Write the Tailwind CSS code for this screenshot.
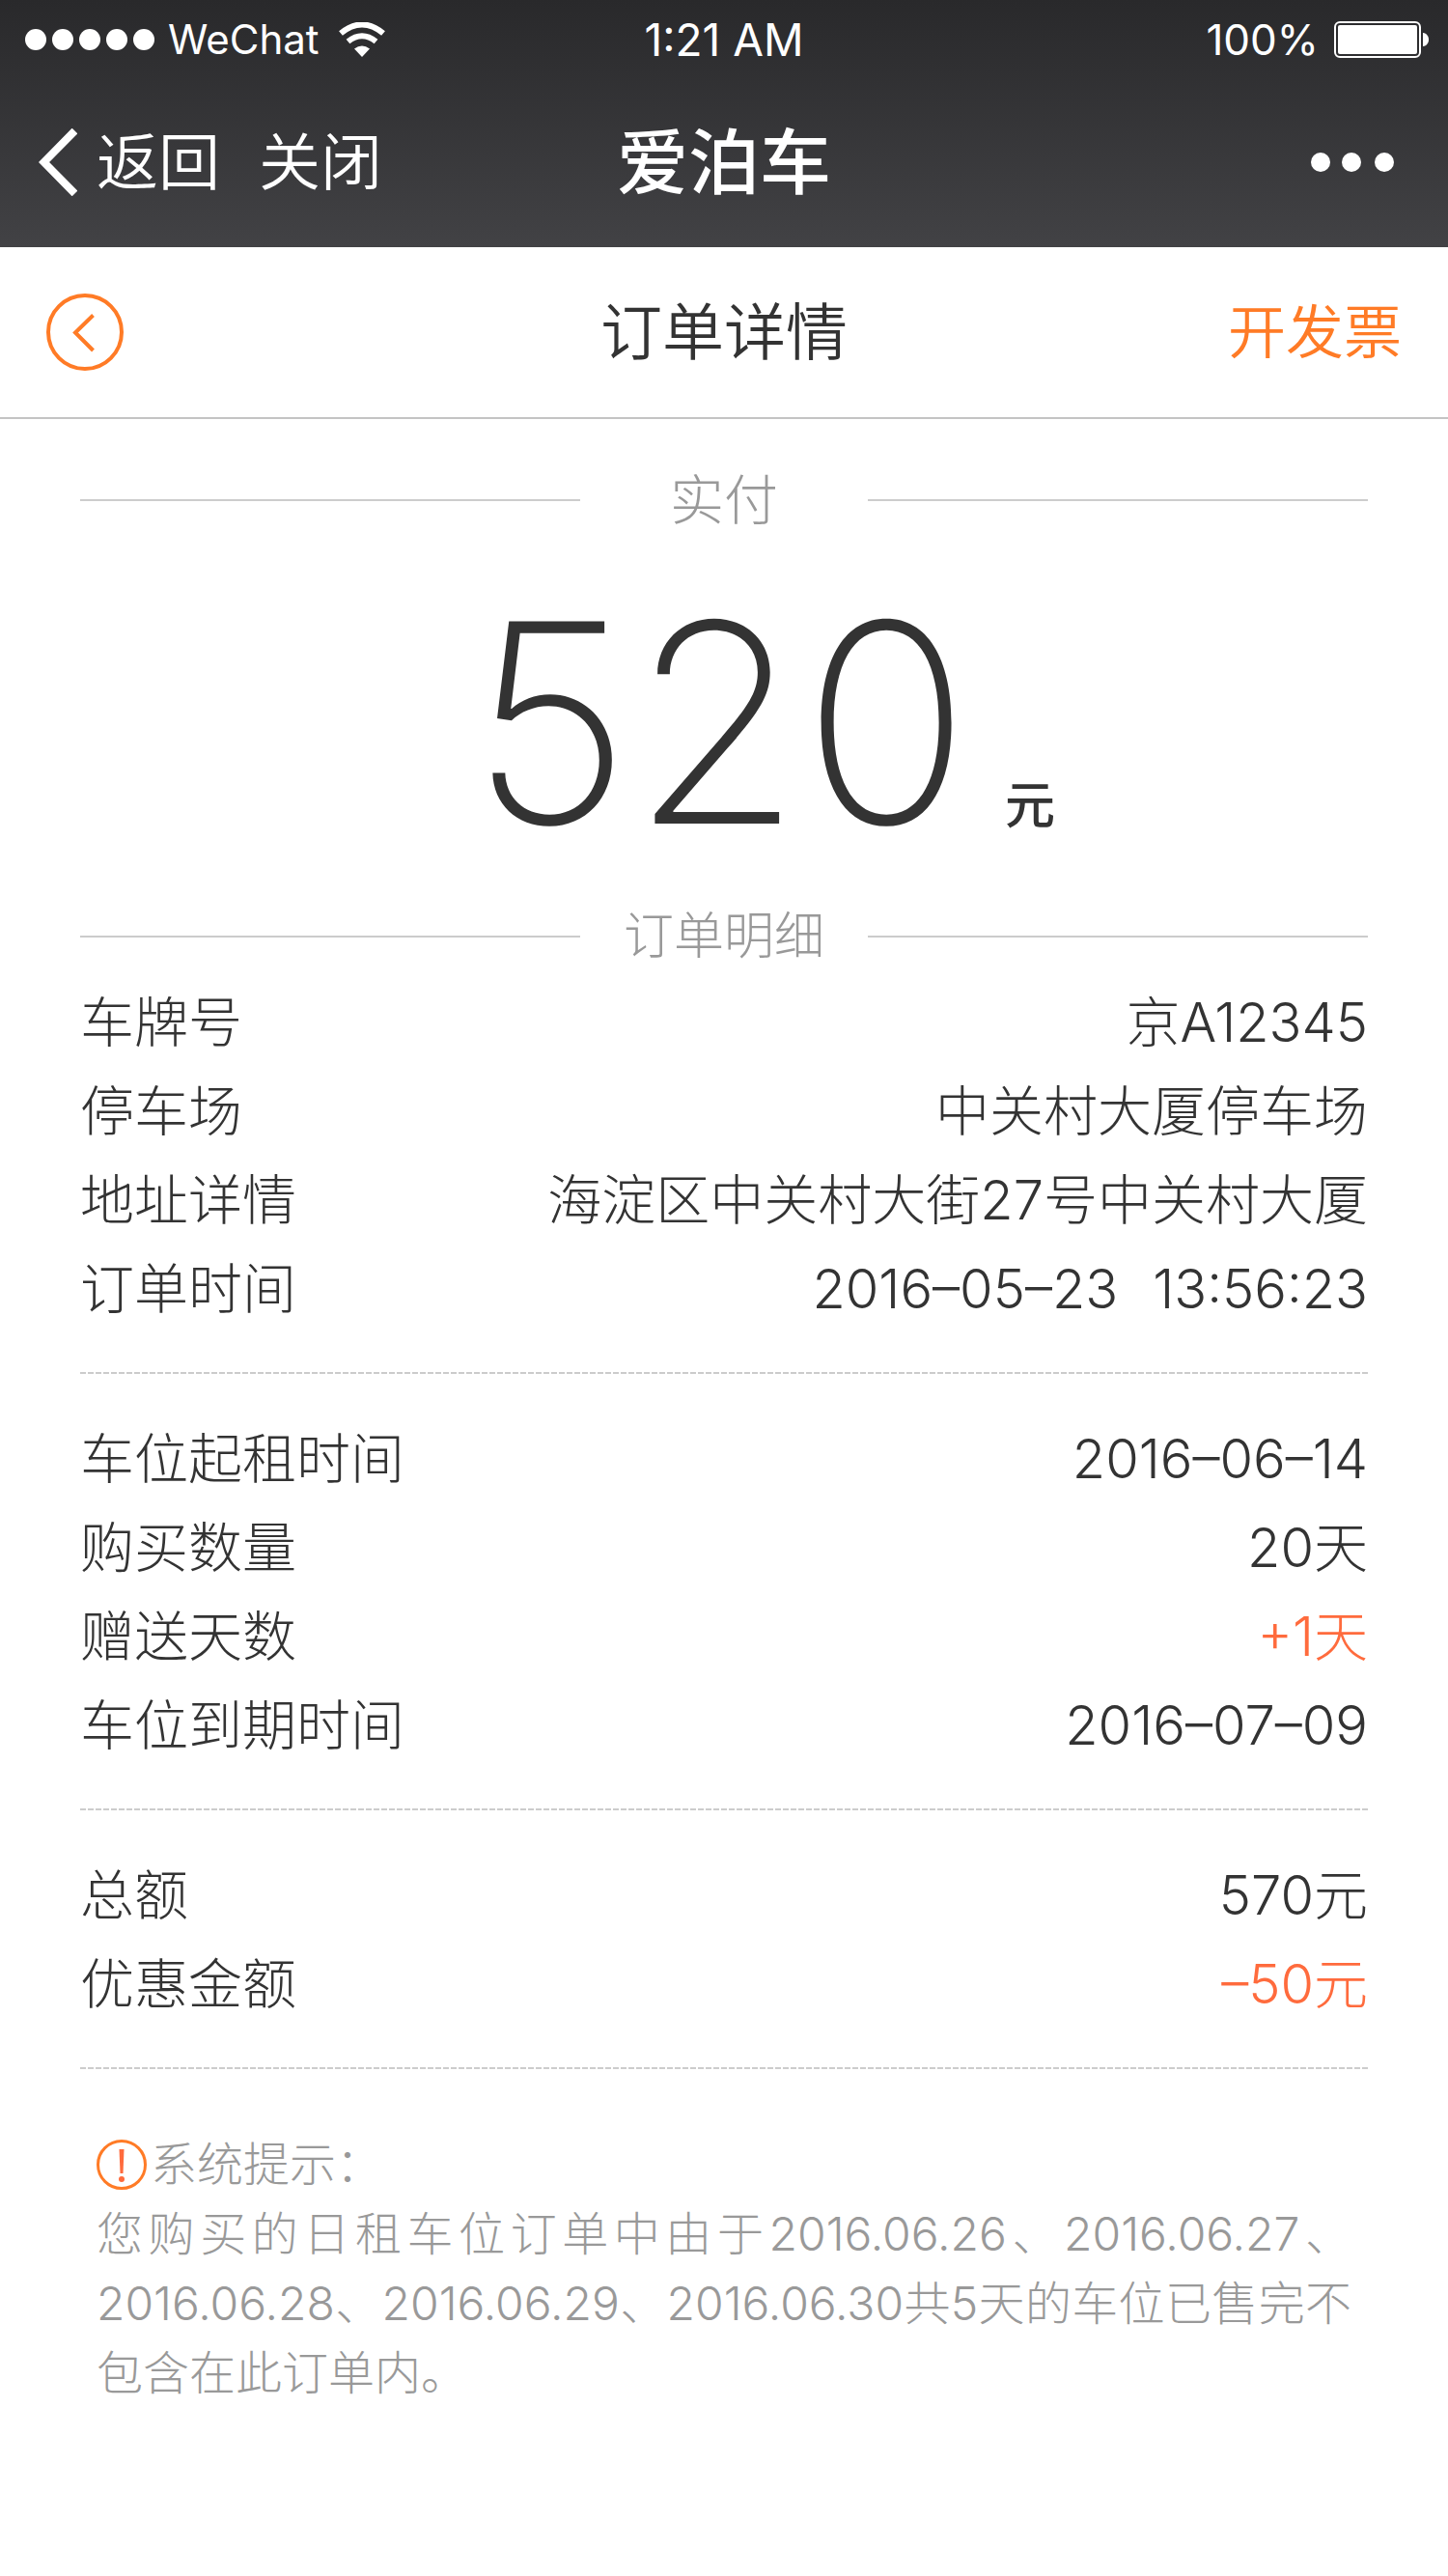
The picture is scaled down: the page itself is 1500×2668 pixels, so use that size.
<!DOCTYPE html>
<html lang="zh-CN">
<head>
<meta charset="utf-8">
<meta name="viewport" content="width=device-width, initial-scale=1">
<title>订单详情</title>
<script src="https://cdn.jsdelivr.net/npm/@tailwindcss/browser@4"></script>
</head>
<body class="min-h-screen bg-white font-['Inter','Noto_Sans_CJK_SC',sans-serif] font-light text-[#333333]">

<header class="h-64 bg-linear-to-b from-[#29292b] to-[#424245] text-white">
  <!-- Status bar -->
  <div class="grid h-[82px] grid-cols-[1fr_auto_1fr] items-center px-5 text-[46px] leading-[56px] font-normal">
    <div class="flex items-center pl-[6px]">
      <svg class="h-[22px] w-[134px]" viewBox="0 0 134 22" fill="currentColor" aria-hidden="true">
        <circle cx="11" cy="11" r="11"/><circle cx="39" cy="11" r="11"/><circle cx="67" cy="11" r="11"/><circle cx="95" cy="11" r="11"/><circle cx="123" cy="11" r="11"/>
      </svg>
      <span class="ml-[14px] text-[42px]">WeChat</span>
      <svg class="ml-5 h-9 w-12" viewBox="0 0 48 36" aria-hidden="true">
        <path d="M2 11.500Q24 -6.500 46 11.500" fill="none" stroke="currentColor" stroke-width="6"/>
        <path d="M9.500 20Q24 8.500 38.500 20" fill="none" stroke="currentColor" stroke-width="6"/>
        <path d="M16 27.500Q24 21.500 32 27.500L24 36Z" fill="currentColor"/>
      </svg>
    </div>
    <span>1:21 AM</span>
    <div class="flex items-center justify-end">
      <span class="text-[44px]">100%</span>
      <svg class="ml-4 h-[38px] w-[98px]" viewBox="0 0 98 38" aria-hidden="true">
        <rect x="1" y="1" width="88" height="36" rx="5" fill="none" stroke="currentColor" stroke-width="2"/>
        <rect x="4" y="4" width="82" height="30" rx="2" fill="currentColor"/>
        <path d="M92 12c8 1 8 13 0 14z" fill="currentColor"/>
      </svg>
    </div>
  </div>
  <!-- WeChat navigation -->
  <nav class="grid h-[174px] grid-cols-[1fr_auto_1fr] items-center px-10 pb-0.5">
    <div class="flex items-center text-[64px] leading-[88px] font-[350]">
      <button type="button" class="flex items-center gap-5">
        <svg class="h-[70px] w-10" viewBox="0 0 40 70" fill="none" stroke="currentColor" stroke-width="8" stroke-linejoin="miter" aria-hidden="true"><path d="M37.500 2.500L5.500 35L37.500 67.500"/></svg>
        返回
      </button>
      <button type="button" class="ml-10">关闭</button>
    </div>
    <h1 class="text-[74px] leading-[88px] font-medium">爱泊车</h1>
    <button type="button" class="mr-4 justify-self-end" aria-label="更多">
      <svg class="h-5 w-[86px]" viewBox="0 0 86 20" fill="currentColor" aria-hidden="true"><circle cx="10" cy="10" r="10"/><circle cx="42" cy="10" r="10"/><circle cx="76" cy="10" r="10"/></svg>
    </button>
  </nav>
</header>

<!-- Page bar -->
<div class="grid h-[178px] grid-cols-[1fr_auto_1fr] items-center border-b-2 border-[#c4c4c4] px-12">
  <button type="button" class="size-20 text-[#ff7b26]" aria-label="返回">
    <svg class="size-20" viewBox="0 0 80 80" fill="none" stroke="currentColor" stroke-width="4" aria-hidden="true"><circle cx="40" cy="40" r="38"/><path d="M48.500 22.500L30 40.500L48.500 59" stroke-width="4"/></svg>
  </button>
  <h2 class="text-[64px] leading-[92px] font-[350]">订单详情</h2>
  <a href="#" class="justify-self-end text-[60px] leading-[88px] font-[350] text-[#ff7b26]">开发票</a>
</div>

<main class="px-[83px] pt-11">
  <!-- Amount paid -->
  <div class="grid h-20 grid-cols-[518fr_298fr_518fr] items-center text-center text-[56px] leading-[80px] text-[#999999]">
    <span class="h-[2px] bg-[#cccccc]"></span><h3>实付</h3><span class="h-[2px] bg-[#cccccc]"></span>
  </div>
  <p class="flex h-[372px] items-baseline justify-center gap-9 pl-20 text-[288px] leading-[380px]">
    <span class="font-extralight">520</span><span class="text-[52px] font-medium">元</span>
  </p>

  <!-- Order details -->
  <div class="grid h-20 grid-cols-[518fr_298fr_518fr] items-center text-center text-[52px] leading-[80px] text-[#999999]">
    <span class="h-[2px] bg-[#cccccc]"></span><h3>订单明细</h3><span class="h-[2px] bg-[#cccccc]"></span>
  </div>
  <dl class="pt-[3px] pb-10 text-[56px] leading-[92px]">
    <div class="flex justify-between"><dt>车牌号</dt><dd>京A12345</dd></div>
    <div class="flex justify-between"><dt>停车场</dt><dd>中关村大厦停车场</dd></div>
    <div class="flex justify-between"><dt>地址详情</dt><dd>海淀区中关村大街27号中关村大厦</dd></div>
    <div class="flex justify-between"><dt>订单时间</dt><dd class="flex gap-9"><span>2016–05–23</span><span>13:56:23</span></dd></div>
  </dl>
  <hr class="h-[2px] border-0 bg-[repeating-linear-gradient(to_right,#cccccc_0px_6px,transparent_6px_8px)]">
  <dl class="pt-[42px] pb-10 text-[56px] leading-[92px]">
    <div class="flex justify-between"><dt>车位起租时间</dt><dd>2016–06–14</dd></div>
    <div class="flex justify-between"><dt>购买数量</dt><dd>20天</dd></div>
    <div class="flex justify-between"><dt>赠送天数</dt><dd class="text-[#ff6b3d]">+1天</dd></div>
    <div class="flex justify-between"><dt>车位到期时间</dt><dd>2016–07–09</dd></div>
  </dl>
  <hr class="h-[2px] border-0 bg-[repeating-linear-gradient(to_right,#cccccc_0px_6px,transparent_6px_8px)]">
  <dl class="pt-[42px] pb-10 text-[56px] leading-[92px]">
    <div class="flex justify-between"><dt>总额</dt><dd>570元</dd></div>
    <div class="flex justify-between"><dt>优惠金额</dt><dd class="text-[#ff6b3d]">–50元</dd></div>
  </dl>
  <hr class="h-[2px] border-0 bg-[repeating-linear-gradient(to_right,#cccccc_0px_6px,transparent_6px_8px)]">

  <!-- System notice -->
  <section class="px-[17px] pt-[63px] pb-16 text-[48px] leading-[72px] text-[#999999]">
    <h3 class="flex items-center gap-1">
      <svg class="size-[52px] text-[#ff7b26]" viewBox="0 0 52 52" aria-hidden="true">
        <circle cx="26" cy="26" r="24.500" fill="none" stroke="currentColor" stroke-width="3"/>
        <path d="M23.500 10h5l-1 25h-3z" fill="#ff6b3d"/><circle cx="26" cy="41" r="3" fill="#ff6b3d"/>
      </svg>
      系统提示：
    </h3>
    <p class="text-justify [text-justify:inter-character]">您购买的日租车位订单中由于2016.06.26、2016.06.27、2016.06.28、2016.06.29、2016.06.30共5天的车位已售完不包含在此订单内。</p>
  </section>
</main>
</body>
</html>
